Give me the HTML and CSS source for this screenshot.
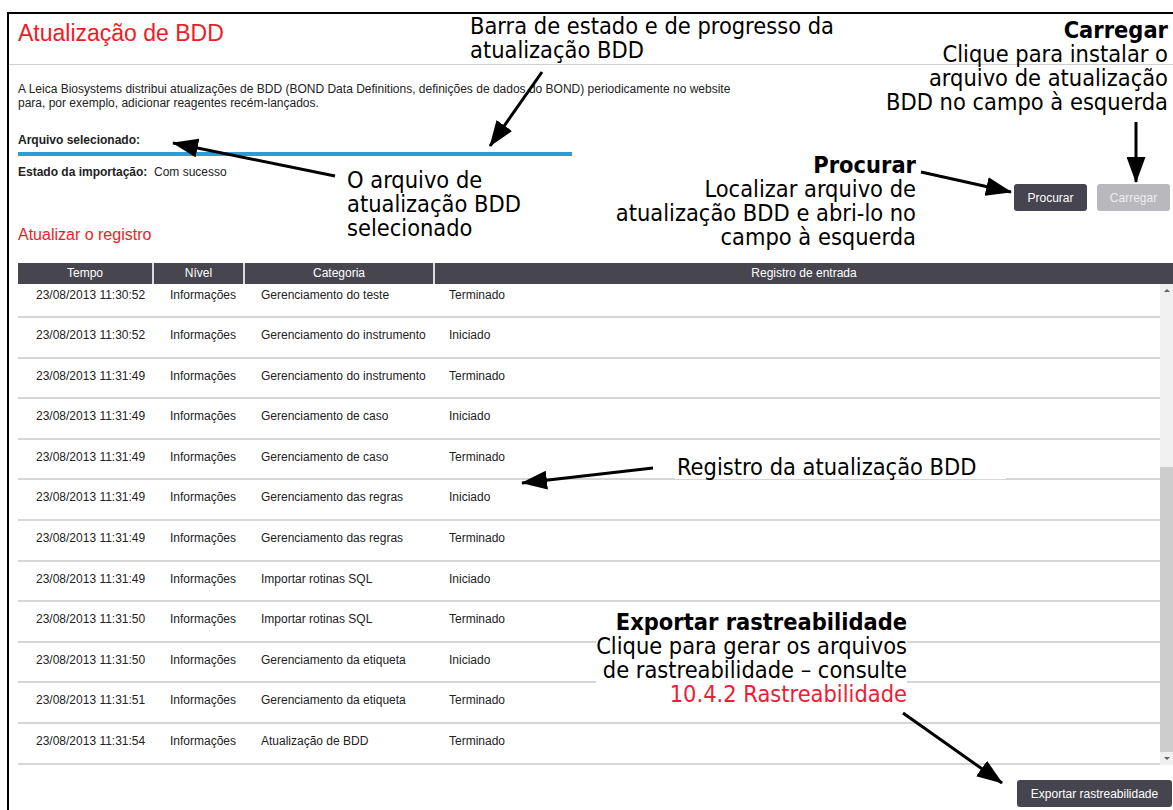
FILE: index.html
```html
<!DOCTYPE html>
<html>
	<head>
		<meta charset="UTF-8">
		<title>Atualização de BDD</title>
		<meta name="viewport" content="width=device-width, initial-scale=1.0">
		<link rel="stylesheet" href="styles.css">
	</head>
	<body>
		<div class="frame">
			<header class="title-bar">
				<h1>Atualização de BDD</h1>
			</header>
			<main class="content">
				<p class="intro">A Leica Biosystems distribui atualizações de BDD (BOND Data Definitions, definições de dados do BOND) periodicamente no website<br>para, por exemplo, adicionar reagentes recém-lançados.</p>
				<div class="file-row"><b>Arquivo selecionado:</b></div>
				<div class="progress"></div>
				<div class="status"><b>Estado da importação:</b>&nbsp;&nbsp;Com sucesso</div>
				<div class="actions">
					<button class="btn" type="button">Procurar</button>
					<button class="btn disabled" type="button">Carregar</button>
				</div>
				<h2>Atualizar o registro</h2>
				<div class="log">
					<div class="log-head">
						<div>Tempo</div>
						<div>Nível</div>
						<div>Categoria</div>
						<div>Registro de entrada</div>
					</div>
					<div class="log-body">
						<div class="rows">
							<div class="row"><span>23/08/2013 11:30:52</span><span>Informações</span><span>Gerenciamento do teste</span><span>Terminado</span></div>
							<div class="row"><span>23/08/2013 11:30:52</span><span>Informações</span><span>Gerenciamento do instrumento</span><span>Iniciado</span></div>
							<div class="row"><span>23/08/2013 11:31:49</span><span>Informações</span><span>Gerenciamento do instrumento</span><span>Terminado</span></div>
							<div class="row"><span>23/08/2013 11:31:49</span><span>Informações</span><span>Gerenciamento de caso</span><span>Iniciado</span></div>
							<div class="row"><span>23/08/2013 11:31:49</span><span>Informações</span><span>Gerenciamento de caso</span><span>Terminado</span></div>
							<div class="row"><span>23/08/2013 11:31:49</span><span>Informações</span><span>Gerenciamento das regras</span><span>Iniciado</span></div>
							<div class="row"><span>23/08/2013 11:31:49</span><span>Informações</span><span>Gerenciamento das regras</span><span>Terminado</span></div>
							<div class="row"><span>23/08/2013 11:31:49</span><span>Informações</span><span>Importar rotinas SQL</span><span>Iniciado</span></div>
							<div class="row"><span>23/08/2013 11:31:50</span><span>Informações</span><span>Importar rotinas SQL</span><span>Terminado</span></div>
							<div class="row"><span>23/08/2013 11:31:50</span><span>Informações</span><span>Gerenciamento da etiqueta</span><span>Iniciado</span></div>
							<div class="row"><span>23/08/2013 11:31:51</span><span>Informações</span><span>Gerenciamento da etiqueta</span><span>Terminado</span></div>
							<div class="row"><span>23/08/2013 11:31:54</span><span>Informações</span><span>Atualização de BDD</span><span>Terminado</span></div>
						</div>
						<div class="scrollbar">
							<div class="sb-btn up"></div>
							<div class="sb-track"><div class="sb-thumb"></div></div>
							<div class="sb-btn down"></div>
						</div>
					</div>
				</div>
				<div class="footer">
					<button class="btn" type="button">Exportar rastreabilidade</button>
				</div>
			</main>
		</div>

		<!-- callouts over the screen -->
		<div class="notes">
			<svg class="arrows" width="1173" height="810" viewBox="0 0 1173 810">
				<defs>
					<marker id="head" markerWidth="26" markerHeight="19" refX="25" refY="9.5" orient="auto" markerUnits="userSpaceOnUse">
						<path d="M0 0 L26 9.5 L0 19 Z" fill="#000"/>
					</marker>
				</defs>
				<g stroke="#000" stroke-width="3" marker-end="url(#head)">
					<line x1="542" y1="72" x2="490" y2="146"/>
					<line x1="1136" y1="122" x2="1136" y2="182"/>
					<line x1="921" y1="172" x2="1011" y2="192"/>
					<line x1="335" y1="176" x2="173" y2="143"/>
					<line x1="653" y1="468" x2="522" y2="483"/>
					<line x1="903" y1="713" x2="1002" y2="783"/>
				</g>
			</svg>
			<div class="note note-bar">Barra de estado e de progresso da<br>atualização BDD</div>
			<div class="note note-load"><b>Carregar</b><br>Clique para instalar o<br>arquivo de atualização<br>BDD no campo à esquerda</div>
			<div class="note note-browse"><b>Procurar</b><br>Localizar arquivo de<br>atualização BDD e abri-lo no<br>campo à esquerda</div>
			<div class="note note-file">O arquivo de<br>atualização BDD<br>selecionado</div>
			<div class="note note-log">Registro da atualização BDD</div>
			<div class="note note-export"><b>Exportar rastreabilidade</b><br>Clique para gerar os arquivos<br>de rastreabilidade – consulte<br><span class="ref">10.4.2 Rastreabilidade</span></div>
		</div>
	</body>
</html>
```

FILE: styles.css
```css
body {
	margin: 0;
	width: 1173px;
	height: 810px;
	overflow: hidden;
	position: relative;
	background: #fff;
	font-family: "Liberation Sans", Arial, sans-serif;
	font-size: 12px;
	color: #222;
}
.frame {
	margin: 12px 0 0 7px;
	height: 798px;
	border-top: 2px solid #000;
	border-left: 2px solid #000;
	box-sizing: border-box;
}
.title-bar {
	height: 51px;
	box-sizing: border-box;
	padding: 7px 0 0 9px;
	border-bottom: 1px solid #cfcfcf;
}
h1 {
	margin: 0;
	font-size: 23px;
	font-weight: normal;
	line-height: 25px;
	color: #ee1c25;
}
.content {
	padding-left: 9px;
}
.intro {
	margin: 17px 0 0;
	line-height: 14px;
}
.file-row {
	margin-top: 23px;
	line-height: 14px;
}
.progress {
	width: 554px;
	height: 4px;
	margin-top: 5px;
	background: #2a9cd8;
}
.status {
	margin-top: 9px;
	line-height: 14px;
}
.actions {
	display: flex;
	justify-content: flex-end;
	gap: 10px;
	margin-top: 5px;
	padding-right: 3px;
}
.btn {
	height: 27px;
	padding: 0 12px;
	border: none;
	border-radius: 3px;
	background: #45444f;
	color: #fff;
	font-family: "Liberation Sans", Arial, sans-serif;
	font-size: 12px;
}
.actions .btn {
	width: 73px;
	padding: 0;
}
.btn.disabled {
	background: #b9b9bd;
	color: #ececee;
}
h2 {
	margin: 15px 0 0;
	font-size: 16px;
	font-weight: normal;
	line-height: 18px;
	color: #ee1c25;
}
.log {
	margin-top: 19px;
}
.log-head {
	display: grid;
	grid-template-columns: 134px 91px 190px 1fr;
	height: 21px;
	background: #47464f;
	color: #fff;
	line-height: 21px;
	text-align: center;
}
.log-head div + div {
	border-left: 2px solid #dcdcdc;
}
.log-body {
	display: flex;
	height: 481px;
}
.rows {
	flex: 1;
	overflow: hidden;
}
.row {
	display: grid;
	grid-template-columns: 134px 91px 190px 1fr;
	height: 40.6px;
	box-sizing: border-box;
	border-bottom: 2px solid #d6d6d6;
	padding-top: 10px;
	line-height: 14px;
}
.row:first-child {
	margin-top: -6.5px;
}
.row span {
	padding-left: 18px;
}
.row span:last-child {
	padding-left: 16px;
}
.scrollbar {
	width: 13px;
	display: flex;
	flex-direction: column;
	background: #f0f0f0;
}
.sb-btn {
	height: 13px;
	position: relative;
}
.sb-btn::after {
	content: "";
	position: absolute;
	left: 4px;
	border-left: 3px solid transparent;
	border-right: 3px solid transparent;
}
.sb-btn.up::after {
	top: 5px;
	border-bottom: 3px solid #606060;
}
.sb-btn.down::after {
	top: 5px;
	border-top: 3px solid #606060;
}
.sb-track {
	flex: 1;
	display: flex;
	flex-direction: column;
	justify-content: flex-end;
}
.sb-thumb {
	height: 285px;
	background: #cdcdcd;
}
.footer {
	display: flex;
	justify-content: flex-end;
	margin-top: 15px;
	padding-right: 1px;
}
.footer .btn {
	width: 155px;
	padding: 0;
}

/* callouts */
.notes {
	position: absolute;
	top: 0;
	left: 0;
	width: 1173px;
	height: 810px;
	pointer-events: none;
}
.arrows {
	position: absolute;
	top: 0;
	left: 0;
}
.note {
	position: absolute;
	font-family: "DejaVu Sans Condensed", "DejaVu Sans", sans-serif;
	font-stretch: condensed;
	font-size: 23.4px;
	line-height: 24px;
	color: #000;
	white-space: nowrap;
}
.note b {
	font-weight: bold;
}
.note-bar {
	top: 14px;
	left: 470px;
}
.note-load {
	top: 18px;
	right: 5px;
	text-align: right;
}
.note-browse {
	top: 153px;
	right: 257px;
	text-align: right;
}
.note-file {
	top: 168px;
	left: 347px;
}
.note-log {
	top: 455px;
	left: 675px;
	padding: 0 30px 0 2px;
	background: #fff;
}
.note-export {
	top: 610px;
	right: 266px;
	text-align: right;
	background: #fff;
}
.ref {
	color: #ee1c36;
}
```
